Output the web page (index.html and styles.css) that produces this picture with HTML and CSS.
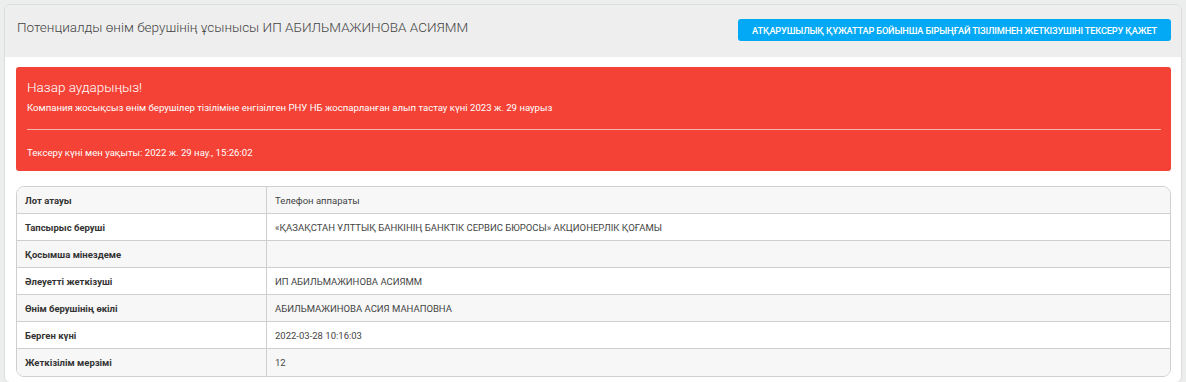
FILE: index.html
```html
<!DOCTYPE html>
<html>
<head>
<meta charset="utf-8">
<link rel="stylesheet" href="styles.css">
</head>
<body>
<div class="card">
  <div class="card-header">
    <h1 class="title">Потенциалды өнім берушінің ұсынысы ИП АБИЛЬМАЖИНОВА АСИЯММ</h1>
    <button class="btn">АТҚАРУШЫЛЫҚ ҚҰЖАТТАР БОЙЫНША БІРЫҢҒАЙ ТІЗІЛІМНЕН ЖЕТКІЗУШІНІ ТЕКСЕРУ ҚАЖЕТ</button>
  </div>
  <div class="card-body">
    <div class="alert">
      <div class="alert-title">Назар аударыңыз!</div>
      <div class="alert-text">Компания жосықсыз өнім берушілер тізіліміне енгізілген РНУ НБ жоспарланған алып тастау күні 2023 ж. 29 наурыз</div>
      <hr class="alert-hr">
      <div class="alert-text">Тексеру күні мен уақыты: 2022 ж. 29 нау., 15:26:02</div>
    </div>
    <table class="info">
      <tr><th>Лот атауы</th><td>Телефон аппараты</td></tr>
      <tr><th>Тапсырыс беруші</th><td>«ҚАЗАҚСТАН ҰЛТТЫҚ БАНКІНІҢ БАНКТІК СЕРВИС БЮРОСЫ» АКЦИОНЕРЛІК ҚОҒАМЫ</td></tr>
      <tr><th>Қосымша мінездеме</th><td></td></tr>
      <tr><th>Әлеуетті жеткізуші</th><td>ИП АБИЛЬМАЖИНОВА АСИЯММ</td></tr>
      <tr><th>Өнім берушінің өкілі</th><td>АБИЛЬМАЖИНОВА АСИЯ МАНАПОВНА</td></tr>
      <tr><th>Берген күні</th><td>2022-03-28 10:16:03</td></tr>
      <tr><th>Жеткізілім мерзімі</th><td>12</td></tr>
    </table>
  </div>
</div>
</body>
</html>
```

FILE: styles.css
```css
html, body {
  margin: 0;
  padding: 0;
}
body {
  background: #eceeed;
  font-family: Roboto, "Liberation Sans", Arial, sans-serif;
  padding: 4px 4px 0 4px;
  height: 382px;
  box-sizing: border-box;
  overflow: hidden;
}
.card {
  background: #fff;
  border: 1px solid #dcdcdc;
  border-radius: 6px;
  width: 1178px;
  overflow: hidden;
  box-sizing: border-box;
}
.card-header {
  background: #eeeeee;
  height: 52px;
  display: flex;
  align-items: flex-start;
  justify-content: space-between;
  padding: 0 10px 0 12px;
}
.title {
  margin: 0;
  padding-top: 14px;
  font-size: 13.5px;
  font-weight: 300;
  color: #444;
  line-height: 17px;
}
.btn {
  margin-top: 14px;
  background: #03a9f4;
  border: 0;
  border-radius: 3px;
  color: #fff;
  font-family: inherit;
  font-size: 9.2px;
  font-weight: 500;
  height: 22px;
  padding: 0 14px;
  letter-spacing: -0.15px;
}
.card-body {
  padding: 10px 10px 5px 11px;
}
.alert {
  background: #f44336;
  color: #fff;
  border-radius: 3px;
  padding: 11px 10px 12px 11px;
  height: 104px;
  box-sizing: border-box;
}
.alert-title {
  font-size: 13.5px;
  font-weight: 300;
  line-height: 18px;
}
.alert-text {
  font-size: 9.6px;
  line-height: 12px;
  margin-top: 6px;
}
.alert-hr {
  border: 0;
  border-top: 1px solid #f9b3ad;
  margin: 15px 0 17px 0;
}
.info {
  margin-top: 15px;
  width: 100%;
  border-collapse: separate;
  border-spacing: 0;
  border: 1px solid #cfcfcf;
  border-radius: 8px;
  overflow: hidden;
  font-size: 9.5px;
  color: #333;
}
.info th, .info td {
  height: 27px;
  padding: 0 8px;
  text-align: left;
  border-bottom: 1px solid #cfcfcf;
  box-sizing: border-box;
}
.info tr:last-child th, .info tr:last-child td {
  border-bottom: 0;
}
.info th {
  width: 250px;
  font-weight: 700;
  border-right: 1px solid #cfcfcf;
}
.info td {
  font-weight: 400;
  color: #444;
}
.info tr:nth-child(odd) {
  background: #f7f7f7;
}
```
